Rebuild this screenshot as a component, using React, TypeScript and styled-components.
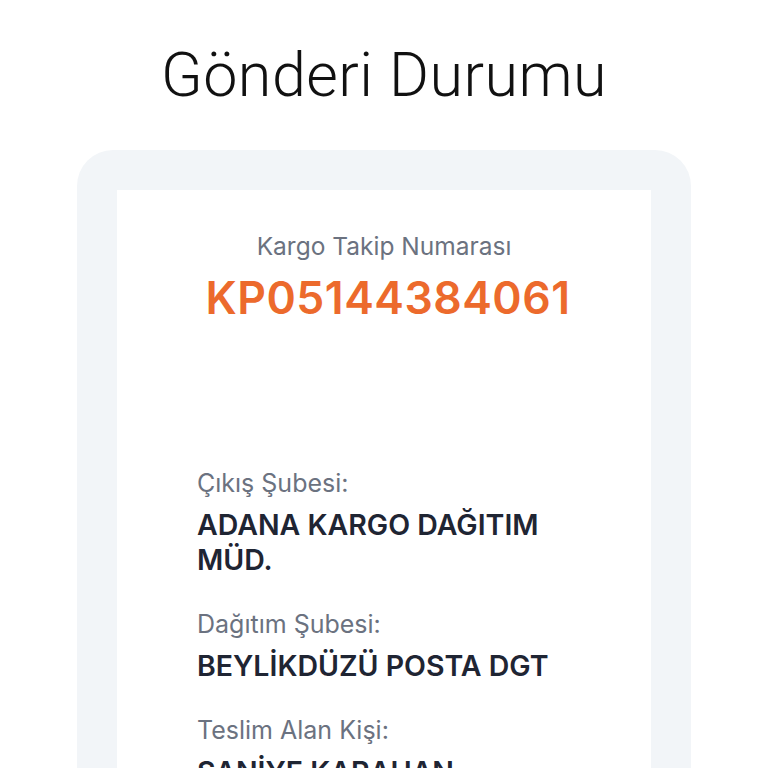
import styled, { createGlobalStyle } from "styled-components";

const GlobalStyle = createGlobalStyle`
  body {
    margin: 0;
    background: #ffffff;
    font-family: "Inter", "Roboto", sans-serif;
  }
`;

const Page = styled.div`
  width: 768px;
  height: 768px;
  overflow: hidden;
  display: flex;
  flex-direction: column;
  align-items: center;
`;

const Title = styled.h1`
  margin: 40px 0 0;
  font-family: "Roboto", sans-serif;
  font-weight: 300;
  font-size: 61px;
  line-height: 70px;
  color: #111111;
  letter-spacing: 0.5px;
`;

const Frame = styled.div`
  margin-top: 40px;
  width: 614px;
  box-sizing: border-box;
  padding: 40px 40px 40px;
  background: #f2f5f8;
  border-radius: 36px;
  flex-shrink: 0;
`;

const Sheet = styled.div`
  background: #ffffff;
  padding: 41px 80px 80px;
  display: flex;
  flex-direction: column;
`;

const TrackLabel = styled.div`
  text-align: center;
  font-size: 24.5px;
  line-height: 30px;
  color: #6b7280;
`;

const TrackNumber = styled.div`
  margin-top: 9px;
  padding-left: 8px;
  text-align: center;
  font-size: 44.5px;
  line-height: 56px;
  font-weight: 600;
  color: #ec6a2c;
  letter-spacing: 0.5px;
`;

const Details = styled.dl`
  margin: 142px 0 0;
  display: flex;
  flex-direction: column;
  gap: 32px;
`;

const Field = styled.div`
  display: flex;
  flex-direction: column;
  gap: 9px;
`;

const FieldLabel = styled.dt`
  font-size: 25px;
  line-height: 30px;
  color: #6b7280;
`;

const FieldValue = styled.dd`
  margin: 0;
  font-size: 28.5px;
  line-height: 35px;
  font-weight: 600;
  color: #1f2533;
`;

const fields = [
  { label: "Çıkış Şubesi:", value: "ADANA KARGO DAĞITIM MÜD." },
  { label: "Dağıtım Şubesi:", value: "BEYLİKDÜZÜ POSTA DGT" },
  { label: "Teslim Alan Kişi:", value: "SANİYE KARAHAN" },
];

function App() {
  return (
    <>
      <GlobalStyle />
      <Page>
        <Title>Gönderi Durumu</Title>
        <Frame>
          <Sheet>
            <TrackLabel>Kargo Takip Numarası</TrackLabel>
            <TrackNumber>KP05144384061</TrackNumber>
            <Details>
              {fields.map((f) => (
                <Field key={f.label}>
                  <FieldLabel>{f.label}</FieldLabel>
                  <FieldValue>{f.value}</FieldValue>
                </Field>
              ))}
            </Details>
          </Sheet>
        </Frame>
      </Page>
    </>
  );
}

export default App;
